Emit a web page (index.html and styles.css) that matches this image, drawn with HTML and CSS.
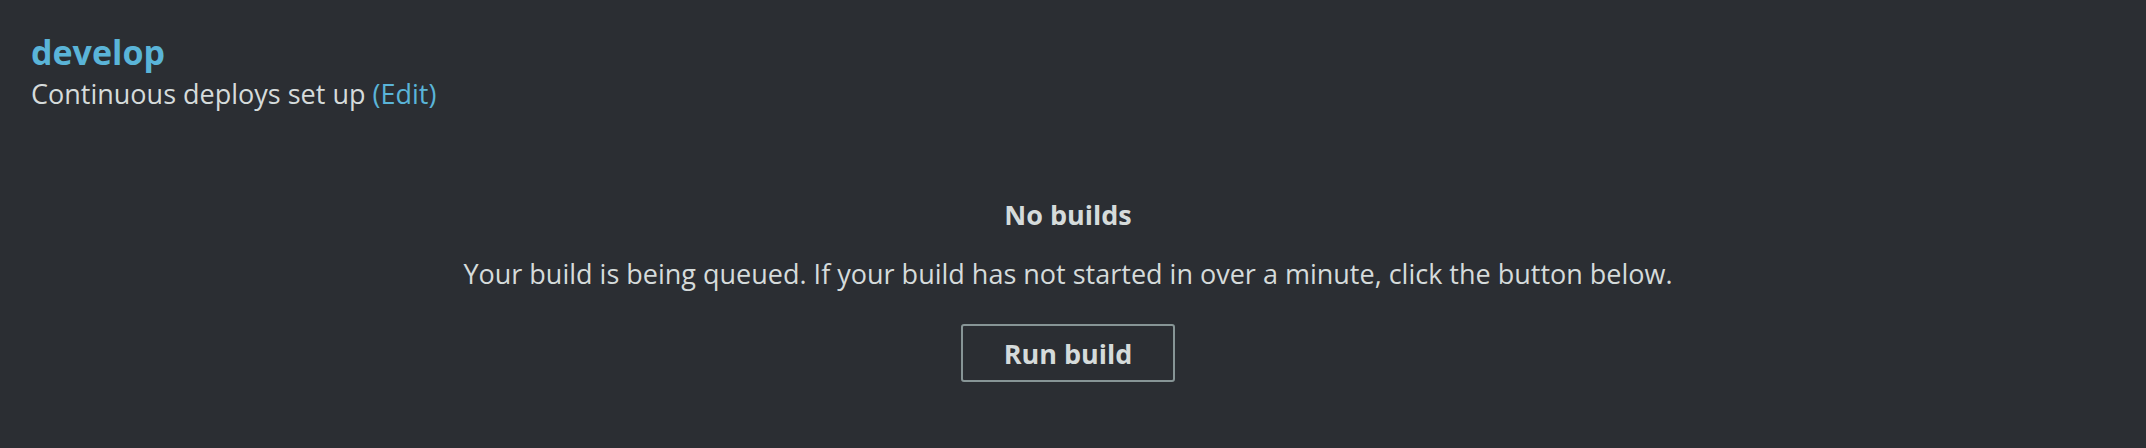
FILE: index.html
```html
<!DOCTYPE html>
<html>
<head>
<meta charset="utf-8">
<link rel="stylesheet" href="styles.css">
</head>
<body>
<div class="page">
  <header class="branch">
    <h1 class="branch-name">develop</h1>
    <p class="branch-sub">Continuous deploys set up <a class="link" href="#">(Edit)</a></p>
  </header>
  <section class="empty">
    <h2 class="empty-title">No builds</h2>
    <p class="empty-text">Your build is being queued. If your build has not started in over a minute, click the button below.</p>
    <button class="btn" type="button">Run build</button>
  </section>
</div>
</body>
</html>
```
FILE: styles.css
```css
html, body {
  margin: 0;
  padding: 0;
  background: #2b2e33;
}
body {
  font-family: "Open Sans", "Noto Sans", sans-serif;
  color: #d5dbdb;
  width: 2146px;
  height: 448px;
  overflow: hidden;
}
.page {
  padding: 29px 41px 0 31px;
}
.branch-name {
  margin: 0;
  font-size: 34px;
  font-weight: 700;
  line-height: 46px;
  color: #5ab4d8;
}
.branch-sub {
  margin: 0;
  font-size: 27px;
  line-height: 38px;
}
.link {
  color: #5ab4d8;
  text-decoration: none;
}
.empty {
  display: flex;
  flex-direction: column;
  align-items: center;
  padding-top: 83px;
}
.empty-title {
  margin: 0;
  font-size: 27px;
  font-weight: 700;
  line-height: 38px;
}
.empty-text {
  margin: 21px 0 0;
  font-size: 27px;
  line-height: 38px;
}
.btn {
  margin-top: 31px;
  width: 214px;
  height: 58px;
  background: transparent;
  border: 2px solid #879596;
  border-radius: 3px;
  color: #d5dbdb;
  font-family: inherit;
  font-size: 27px;
  font-weight: 700;
  padding: 0;
}
```
